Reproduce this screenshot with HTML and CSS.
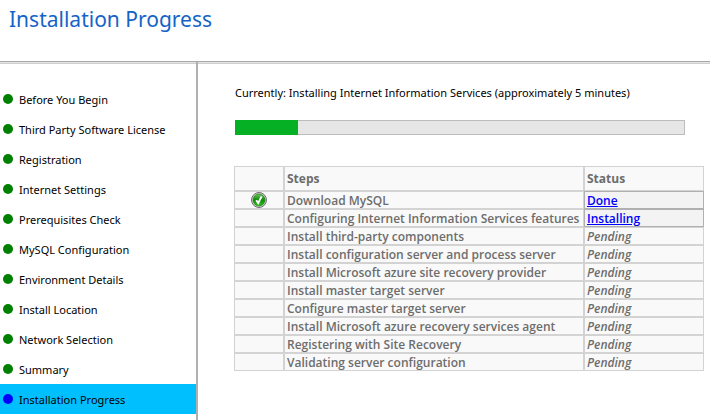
FILE: index.html
```html
<!DOCTYPE html>
<html lang="en">
<head>
    <meta charset="UTF-8">
    <meta name="viewport" content="width=device-width, initial-scale=1.0">
    <title>Installation Progress</title>
    <link rel="stylesheet" href="styles.css">
</head>
<body>

<header class="header">
    <h1>Installation Progress</h1>
</header>

<div class="wizard">
    <nav class="sidebar">
        <ul>
            <li><span class="dot"></span>Before You Begin</li>
            <li><span class="dot"></span>Third Party Software License</li>
            <li><span class="dot"></span>Registration</li>
            <li><span class="dot"></span>Internet Settings</li>
            <li><span class="dot"></span>Prerequisites Check</li>
            <li><span class="dot"></span>MySQL Configuration</li>
            <li><span class="dot"></span>Environment Details</li>
            <li><span class="dot"></span>Install Location</li>
            <li><span class="dot"></span>Network Selection</li>
            <li><span class="dot"></span>Summary</li>
            <li class="active" aria-current="step"><span class="dot"></span>Installation Progress</li>
        </ul>
    </nav>

    <main class="content">
        <label class="current" for="progress">Currently: Installing Internet Information Services (approximately 5 minutes)</label>
        <progress id="progress" class="progress" value="14" max="100"></progress>

        <table class="steps">
            <thead>
                <tr><th class="icon-col"></th><th>Steps</th><th class="status-col">Status</th></tr>
            </thead>
            <tbody>
                <tr>
                    <td class="icon">
                        <svg width="16" height="16" viewBox="0 0 16 16" role="img" aria-label="Done">
                            <defs>
                                <linearGradient id="green" x1="0" y1="0" x2="0" y2="1">
                                    <stop offset="0" stop-color="#6fc45c"/>
                                    <stop offset="0.5" stop-color="#0c8a08"/>
                                    <stop offset="1" stop-color="#2ccc14"/>
                                </linearGradient>
                            </defs>
                            <circle cx="8" cy="8" r="7.5" fill="#d2d2d2" stroke="#707070"/>
                            <circle cx="8" cy="8" r="6" fill="url(#green)" stroke="#187512" stroke-width="0.6"/>
                            <path d="M5.2 8.2l2 2.9L10.6 4.4" fill="none" stroke="#fff" stroke-width="2"/>
                        </svg>
                    </td>
                    <td>Download MySQL</td>
                    <td class="linked"><a href="#">Done</a></td>
                </tr>
                <tr><td></td><td>Configuring Internet Information Services features</td><td class="linked"><a href="#">Installing</a></td></tr>
                <tr><td></td><td>Install third-party components</td><td class="pending">Pending</td></tr>
                <tr><td></td><td>Install configuration server and process server</td><td class="pending">Pending</td></tr>
                <tr><td></td><td>Install Microsoft azure site recovery provider</td><td class="pending">Pending</td></tr>
                <tr><td></td><td>Install master target server</td><td class="pending">Pending</td></tr>
                <tr><td></td><td>Configure master target server</td><td class="pending">Pending</td></tr>
                <tr><td></td><td>Install Microsoft azure recovery services agent</td><td class="pending">Pending</td></tr>
                <tr><td></td><td>Registering with Site Recovery</td><td class="pending">Pending</td></tr>
                <tr><td></td><td>Validating server configuration</td><td class="pending">Pending</td></tr>
            </tbody>
        </table>
    </main>
</div>

</body>
</html>
```
FILE: styles.css
```css
* {
    box-sizing: border-box;
}

body {
    display: flex;
    flex-direction: column;
    min-height: 100vh;
    margin: 0;
    background-color: #fff;
    color: #000;
    font-family: "Noto Sans", sans-serif;
    font-size: 11px;
}

.header {
    padding: 4px 9px 27px;
    border-bottom: 1px solid #a8a8a8;
    box-shadow: 0 1px #e3e3e3, 0 2px #cfcfcf;
}

h1 {
    margin: 0;
    color: #1464c8;
    font-size: 21px;
    font-weight: 400;
    line-height: 30px;
}

.wizard {
    display: flex;
    flex: 1;
}

.sidebar {
    flex: 0 0 198px;
    padding-top: 22px;
    border-right: 2px solid #b0b0b0;
}

.sidebar ul {
    margin: 0;
    padding: 0;
    list-style: none;
}

.sidebar li {
    display: flex;
    align-items: center;
    gap: 6px;
    height: 30px;
    padding-left: 3px;
}

.sidebar .active {
    background-color: #00bfff;
}

.dot {
    width: 10px;
    height: 10px;
    border-radius: 50%;
    background-color: #008000;
}

.active .dot {
    background-color: #0000ff;
}

.content {
    flex: 1;
    padding: 22px 6px 20px 36px;
}

.current {
    display: block;
    padding-left: 1px;
    line-height: 18px;
}

.progress {
    display: block;
    width: calc(100% - 20px);
    height: 15px;
    margin: 18px 0 31px 1px;
    border: none;
    background-color: #e6e6e6;
    appearance: none;
}

.progress::-webkit-progress-bar {
    background-color: #e6e6e6;
    box-shadow: inset 0 0 0 1px #bcbcbc;
}

.progress::-webkit-progress-value {
    background-color: #06b025;
}

.steps {
    width: 100%;
    table-layout: fixed;
    border-spacing: 0;
    color: #6d6d6d;
    font-family: "Open Sans", sans-serif;
    font-size: 12px;
    font-weight: 600;
    line-height: 15px;
}

.steps th,
.steps td {
    height: 18px;
    padding: 1px 2px 0;
    border: 1px solid #d3d3d3;
    background-color: #f9f9f9;
    text-align: left;
    white-space: nowrap;
}

.steps th {
    height: 25px;
    padding-top: 0;
    font-weight: 700;
}

.icon-col {
    width: 50px;
}

.status-col {
    width: 120px;
}

.steps .icon {
    padding: 0;
}

.icon svg {
    display: block;
    margin: 0 auto;
}

.steps .linked {
    border-color: #b0b0b0;
    background-color: #f3f3f3;
}

.linked a {
    color: #0000ff;
}

.pending {
    font-style: italic;
}
```
